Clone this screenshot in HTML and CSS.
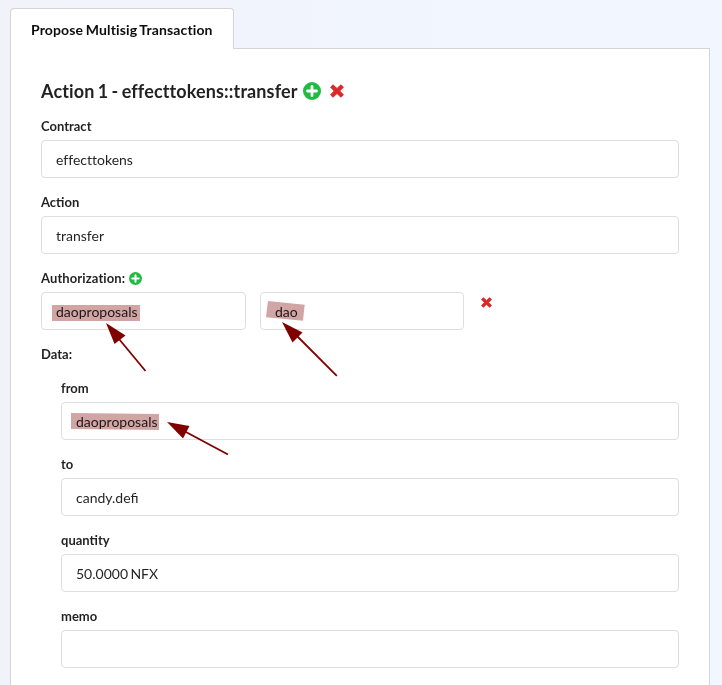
FILE: index.html
```html
<!DOCTYPE html>
<html lang="en">
<head>
<meta charset="utf-8">
<title>Propose Multisig Transaction</title>
<link rel="stylesheet" href="styles.css">
</head>
<body>
<svg class="defs" width="0" height="0" aria-hidden="true">
  <symbol id="plus" viewBox="0 0 18 18"><circle cx="9" cy="9" r="9" fill="#21ba45"/><path d="M9 4.500v9M4.500 9h9" stroke="#fff" stroke-width="2.8" stroke-linecap="round"/></symbol>
  <symbol id="cross" viewBox="0 0 14 14"><path d="M3 .8 7 4.500 11 .8 13.400 3.200 9.700 7 13.400 10.800 11 13.200 7 9.500 3 13.200 .6 10.800 4.300 7 .6 3.200Z" fill="#db2828" stroke="#db2828" stroke-width="1" stroke-linejoin="round"/></symbol>
</svg>
<main class="page">
  <div class="tabs"><a class="tab">Propose Multisig Transaction</a></div>
  <section class="panel">
    <h3 class="title"><span class="title-text">Action 1 - effecttokens::transfer</span>
      <svg class="icon-plus"><use href="#plus"/></svg><svg class="icon-cross"><use href="#cross"/></svg>
    </h3>
    <div class="field"><label>Contract</label><div class="input contract">effecttokens</div></div>
    <div class="field"><label>Action</label><div class="input">transfer</div></div>
    <div class="field">
      <label><span class="auth">Authorization:</span> <svg class="icon-plus-small"><use href="#plus"/></svg></label>
      <div class="row">
        <div class="input">daoproposals</div>
        <div class="input">dao</div>
        <svg class="icon-cross-small"><use href="#cross"/></svg>
      </div>
    </div>
    <div class="data">
      <label>Data:</label>
      <div class="nested">
        <div class="field"><label>from</label><div class="input">daoproposals</div></div>
        <div class="field"><label>to</label><div class="input">candy.defi</div></div>
        <div class="field"><label>quantity</label><div class="input">50.0000 NFX</div></div>
        <div class="field"><label>memo</label><div class="input"></div></div>
      </div>
    </div>
  </section>
</main>
<svg class="annotations" viewBox="0 0 722 685" aria-hidden="true">
  <g fill="#d2a5a5">
    <path d="M52 305H140V321H52Z"/>
    <path d="M268 301 304.700 304.700 303 320.700 266 317.200Z"/>
    <path d="M71 413 159 414V430L71 429Z"/>
  </g>
  <g stroke="#800000" stroke-width="1.800">
    <path d="M119 339 145.500 371"/>
    <path d="M297 336 336.800 375.800"/>
    <path d="M185 431.500 228 454.500"/>
  </g>
  <g fill="#800000">
    <path d="M106 323 125.500 335.500 114.500 344Z"/>
    <path d="M282 322 302.500 332.500 292.500 342.500Z"/>
    <path d="M167 422 189.500 426 183 438.500Z"/>
  </g>
</svg>
</body>
</html>
```

FILE: styles.css
```css
* { box-sizing: border-box; }
body {
  margin: 0;
  height: 685px;
  overflow: hidden;
  background: linear-gradient(90deg, #f2f2fb, #f1f5fe 50%, #f2f6fe);
  font: 14px/20px Lato, "Liberation Sans", sans-serif;
  color: rgba(0, 0, 0, .87);
}
.defs { position: absolute; }
.page { height: 685px; padding: 8px 12px 0 10px; }
.tabs { display: flex; }
.tab {
  height: 41px;
  margin-bottom: -1px;
  padding: 11px 20px 0;
  width: 224px;
  white-space: nowrap;
  border: 1px solid #d4d4d5;
  border-bottom: 0;
  border-radius: 4px 4px 0 0;
  background: #fff;
  color: rgba(0, 0, 0, .95);
  font-weight: 700;
  line-height: 20px;
  letter-spacing: .13px;
  word-spacing: -.9px;
  position: relative;
}
.panel {
  height: 637px;
  padding: 30px 30px 0;
  border: 1px solid #d4d4d5;
  border-bottom: 0;
  background: #fff;
}
.title {
  display: flex;
  align-items: center;
  height: 24px;
  margin: 0 0 13px;
  font-size: 18px;
  line-height: 24px;
}
.title-text {
  width: 257px;
  white-space: nowrap;
  letter-spacing: .12px;
  word-spacing: -1.2px;
}
.contract { font-variant-ligatures: none; }
.auth { letter-spacing: .1px; }
.icon-plus { width: 18px; height: 18px; margin-left: 5px; }
.icon-cross { width: 14px; height: 14px; margin-left: 9px; }
.icon-plus-small { width: 13px; height: 13px; margin-left: 4px; }
.icon-cross-small { width: 11px; height: 11px; margin: 5px 0 0 3px; }
.field { margin-bottom: 14px; }
.nested .field:last-child { margin-bottom: 0; }
label {
  display: flex;
  align-items: center;
  height: 20px;
  margin-bottom: 4px;
  font-size: 13px;
  font-weight: 700;
}
.input {
  height: 38px;
  padding: 9px 14px;
  border: 1px solid #dededf;
  border-radius: 4px;
  background: #fff;
  word-spacing: -1.2px;
}
.row { display: grid; grid-template-columns: 205px 204px auto; justify-content: start; column-gap: 14px; }
.nested { padding: 10px 0 0 20px; }
.annotations {
  position: absolute;
  top: 0;
  left: 0;
  width: 722px;
  height: 685px;
  pointer-events: none;
  mix-blend-mode: multiply;
}
```
